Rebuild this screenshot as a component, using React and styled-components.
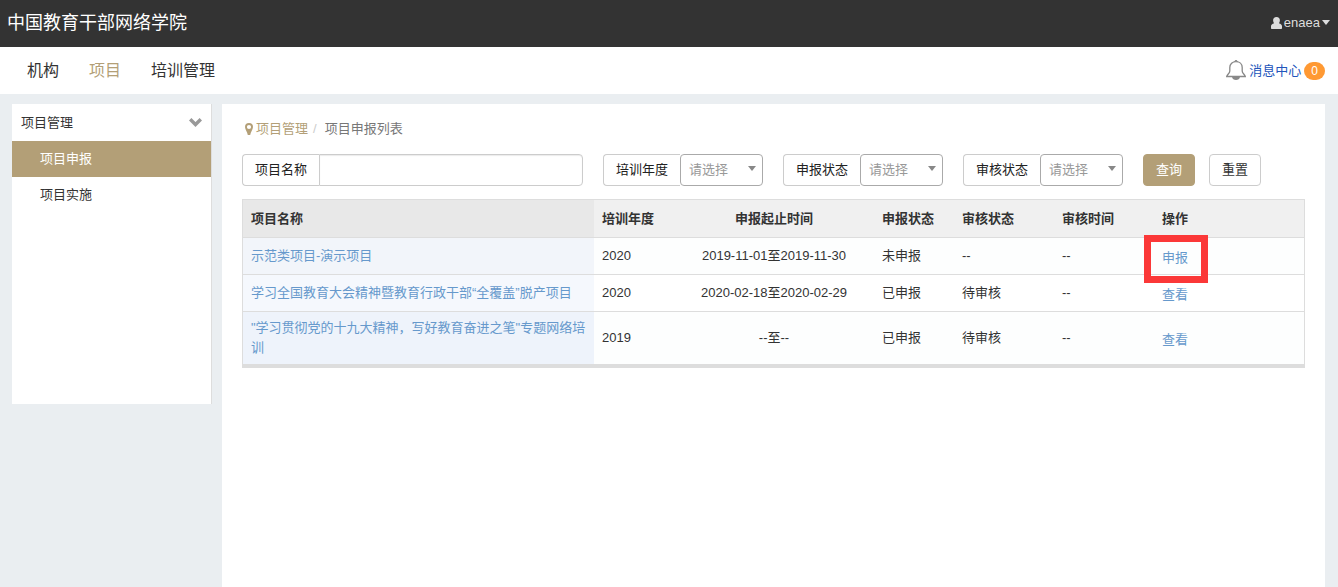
import React, { useState } from "react";
import styled, { createGlobalStyle } from "styled-components";

const navItems = ["机构", "项目", "培训管理"];
const sideItems = ["项目申报", "项目实施"];

const filters = [
  { id: "year", label: "培训年度", options: ["2020", "2019"] },
  { id: "declare", label: "申报状态", options: ["未申报", "已申报"] },
  { id: "audit", label: "审核状态", options: ["待审核", "已审核"] },
];

const projects = [
  {
    name: "示范类项目-演示项目",
    year: "2020",
    range: "2019-11-01至2019-11-30",
    status: "未申报",
    audit: "--",
    auditTime: "--",
    action: "申报",
    marked: true,
    tint: "#f2f5fa",
  },
  {
    name: "学习全国教育大会精神暨教育行政干部“全覆盖”脱产项目",
    year: "2020",
    range: "2020-02-18至2020-02-29",
    status: "已申报",
    audit: "待审核",
    auditTime: "--",
    action: "查看",
    tint: "#f5f8fd",
  },
  {
    name: "\"学习贯彻党的十九大精神，写好教育奋进之笔\"专题网络培训",
    year: "2019",
    range: "--至--",
    status: "已申报",
    audit: "待审核",
    auditTime: "--",
    action: "查看",
    tint: "#eef3fb",
  },
];

function UserIcon() {
  return (
    <svg width="11" height="12" viewBox="0 0 11 12" fill="#ddd" aria-hidden="true">
      <path d="M5.500 0C3.300 0 2.100 1.300 2.100 3.300c0 1.200.4 2.200 1 2.900C1.200 6.700 0 7.800 0 9.300V11c0 .6.400 1 1 1h9c.6 0 1-.4 1-1V9.300c0-1.500-1.200-2.600-3.100-3.100.6-.7 1-1.700 1-2.900C8.900 1.300 7.700 0 5.500 0z" />
    </svg>
  );
}

function BellIcon() {
  return (
    <svg width="20" height="21" viewBox="0 0 20 21" fill="none" stroke="#888" aria-hidden="true">
      <path d="M8.500 1.800C8.500 0 11.500 0 11.500 1.800" />
      <path d="M3.800 11V7.500c0-3.600 2.700-5.800 6.200-5.800s6.200 2.200 6.200 5.800V11c0 2.400 2.500 3.200 3.100 5.500H.7C1.300 14.200 3.800 13.400 3.800 11z" strokeWidth="1.300" />
      <path d="M6 17h8c-.3 1.900-1.900 3-4 3s-3.700-1.100-4-3z" fill="#888" stroke="none" />
    </svg>
  );
}

function MarkerIcon() {
  return (
    <svg width="8" height="12" viewBox="0 0 8 12" fill="#b39f77" aria-hidden="true">
      <path fillRule="evenodd" d="M4 0a4 4 0 0 0-4 4c0 2.500 2.300 4.500 2.800 8h2.400C5.700 8.500 8 6.500 8 4a4 4 0 0 0-4-4zm0 1.900a2.100 2.100 0 1 1 0 4.200 2.100 2.100 0 0 1 0-4.200z" />
    </svg>
  );
}

function ChevronIcon() {
  return (
    <svg width="13" height="9" viewBox="0 0 13 9" fill="none" stroke="#999" strokeWidth="3.400" aria-hidden="true">
      <path d="M1.200 1.300l5.300 5.200 5.300-5.200" />
    </svg>
  );
}

function Caret({ color }) {
  return (
    <svg width="8" height="5" viewBox="0 0 8 5" fill={color} aria-hidden="true">
      <path d="M0 0h8L4 5z" />
    </svg>
  );
}

export default function App() {
  const [name, setName] = useState("");
  const [values, setValues] = useState({});

  const reset = () => {
    setName("");
    setValues({});
  };

  return (
    <>
      <GlobalStyle />
      <Page>
        <Header>
          <Brand>中国教育干部网络学院</Brand>
          <UserMenu type="button">
            <UserIcon />
            <span>enaea</span>
            <Caret color="#ddd" />
          </UserMenu>
        </Header>
        <NavBar>
          <NavLinks>
            {navItems.map((item) => (
              <NavLink key={item} href="#" $active={item === "项目"}>
                {item}
              </NavLink>
            ))}
          </NavLinks>
          <Messages href="#">
            <BellIcon />
            <span>消息中心</span>
            <Badge>0</Badge>
          </Messages>
        </NavBar>
        <Body>
          <Sidebar>
            <SideTitle type="button">
              项目管理
              <ChevronIcon />
            </SideTitle>
            {sideItems.map((item) => (
              <SideLink key={item} href="#" $active={item === "项目申报"}>
                {item}
              </SideLink>
            ))}
          </Sidebar>
          <Main>
            <Breadcrumb>
              <MarkerIcon />
              <a href="#">项目管理</a>
              <i>/</i>
              <span>项目申报列表</span>
            </Breadcrumb>
            <FilterBar onSubmit={(e) => e.preventDefault()}>
              <NameField>
                <FieldLabel htmlFor="name">项目名称</FieldLabel>
                <NameInput id="name" value={name} onChange={(e) => setName(e.target.value)} />
              </NameField>
              {filters.map(({ id, label, options }) => (
                <Field key={id}>
                  <FieldLabel htmlFor={id}>{label}</FieldLabel>
                  <SelectBox>
                    <select
                      id={id}
                      value={values[id] || ""}
                      onChange={(e) => setValues({ ...values, [id]: e.target.value })}
                    >
                      <option value="">请选择</option>
                      {options.map((option) => (
                        <option key={option}>{option}</option>
                      ))}
                    </select>
                    <Caret color="#888" />
                  </SelectBox>
                </Field>
              ))}
              <Buttons>
                <Button $primary>查询</Button>
                <Button type="button" onClick={reset}>重置</Button>
              </Buttons>
            </FilterBar>
            <Table>
              <colgroup>
                <col width="351" />
                <col width="80" />
                <col width="200" />
                <col width="80" />
                <col width="100" />
                <col width="100" />
                <col />
              </colgroup>
              <thead>
                <tr>
                  <th>项目名称</th>
                  <th>培训年度</th>
                  <th>申报起止时间</th>
                  <th>申报状态</th>
                  <th>审核状态</th>
                  <th>审核时间</th>
                  <th>操作</th>
                </tr>
              </thead>
              <tbody>
                {projects.map((project) => (
                  <tr key={project.name}>
                    <NameCell $tint={project.tint}>
                      <a href="#">{project.name}</a>
                    </NameCell>
                    <td>{project.year}</td>
                    <td>{project.range}</td>
                    <td>{project.status}</td>
                    <td>{project.audit}</td>
                    <td>{project.auditTime}</td>
                    <ActionCell>
                      <ActionLink href="#" $marked={project.marked}>
                        {project.action}
                      </ActionLink>
                    </ActionCell>
                  </tr>
                ))}
              </tbody>
            </Table>
          </Main>
        </Body>
      </Page>
    </>
  );
}

const GlobalStyle = createGlobalStyle`
* {
  box-sizing: border-box;
}
body {
  margin: 0;
  color: #333;
  background-color: #eaeef1;
  font: 13px/20px "Liberation Sans", "Noto Sans CJK SC", sans-serif;
}
a {
  text-decoration: none;
}
button, input, select {
  font: inherit;
  color: inherit;
}
button {
  cursor: pointer;
}
svg {
  display: block;
  flex: none;
}
`;
const Page = styled.div`
  display: flex;
  flex-direction: column;
  min-height: 100vh;
`;
const Header = styled.header`
  display: flex;
  justify-content: space-between;
  align-items: center;
  height: 47px;
  padding: 0 8px 2px 7px;
  background-color: #333;
`;
const Brand = styled.h1`
  margin: 0;
  color: #fff;
  font-size: 18px;
  font-weight: normal;
  line-height: 24px;
`;
const UserMenu = styled.button`
  display: flex;
  align-items: center;
  gap: 2px;
  padding: 0;
  border: 0;
  background: none;
  color: #ddd;
`;
const NavBar = styled.nav`
  display: flex;
  justify-content: space-between;
  align-items: center;
  height: 47px;
  padding: 0 13px 0 27px;
  background-color: #fff;
`;
const NavLinks = styled.div`
  display: flex;
  gap: 30px;
`;
const NavLink = styled.a`
  color: ${({ $active }) => ($active ? "#b39f77" : "#333")};
  font-size: 16px;
  line-height: 24px;
`;
const Messages = styled.a`
  display: flex;
  align-items: center;
  gap: 3px;
  color: #25b;
`;
const Badge = styled.span`
  padding: 0 7px;
  border-radius: 9px;
  background-color: #f93;
  color: #fff;
  font-size: 12px;
  line-height: 18px;
`;
const Body = styled.div`
  display: flex;
  flex: 1;
  align-items: flex-start;
  gap: 10px;
  padding: 10px 13px 0 12px;
`;
const Sidebar = styled.aside`
  flex: none;
  width: 200px;
  min-height: 300px;
  border-right: 1px solid #ddd;
  background-color: #fff;
`;
const SideTitle = styled.button`
  display: flex;
  justify-content: space-between;
  align-items: center;
  width: 100%;
  height: 37px;
  padding: 0 9px;
  border: 0;
  background: none;
`;
const SideLink = styled.a`
  display: block;
  padding-left: 28px;
  background-color: ${({ $active }) => ($active ? "#b39f77" : "#fff")};
  color: ${({ $active }) => ($active ? "#fff" : "#333")};
  line-height: 36px;
`;
const Main = styled.main`
  flex: 1;
  align-self: stretch;
  min-width: 0;
  padding: 15px 20px;
  background-color: #fff;
`;
const Breadcrumb = styled.div`
  display: flex;
  align-items: center;
  gap: 3px;
  padding-left: 3px;
  color: #777;
  a {
    color: #b39f77;
  }
  i {
    padding: 0 5px 0 2px;
    color: #ccc;
    font-style: normal;
  }
`;
const FilterBar = styled.form`
  display: flex;
  flex-wrap: wrap;
  gap: 12px 20px;
  margin: 15px 0 13px;
`;
const Field = styled.div`
  display: flex;
  height: 32px;
`;
const NameField = styled(Field)`
  width: 341px;
`;
const FieldLabel = styled.label`
  flex: none;
  padding: 0 12px;
  border: 1px solid #ccc;
  border-right: 0;
  border-radius: 4px 0 0 4px;
  color: #222;
  line-height: 30px;
`;
const NameInput = styled.input`
  flex: 1;
  min-width: 0;
  padding: 0 8px;
  border: 1px solid #ccc;
  border-radius: 0 4px 4px 0;
  box-shadow: inset 0 1px 1px rgba(0, 0, 0, 0.08);
`;
const SelectBox = styled.div`
  position: relative;
  select {
    appearance: none;
    width: 83px;
    height: 32px;
    padding: 0 8px;
    border: 1px solid #aaa;
    border-radius: 4px;
    background-color: #fff;
    color: #999;
  }
  svg {
    position: absolute;
    top: 12px;
    right: 7px;
    pointer-events: none;
  }
`;
const Buttons = styled.div`
  display: flex;
  gap: 14px;
`;
const Button = styled.button`
  width: 52px;
  height: 32px;
  padding: 0;
  border: 1px solid ${({ $primary }) => ($primary ? "#b39f77" : "#ccc")};
  border-radius: 4px;
  background-color: ${({ $primary }) => ($primary ? "#b39f77" : "#fff")};
  color: ${({ $primary }) => ($primary ? "#fff" : "#333")};
`;
const Table = styled.table`
  width: 100%;
  table-layout: fixed;
  border: 1px solid #ddd;
  border-bottom-width: 4px;
  border-spacing: 0;
  th, td {
    height: 37px;
    padding: 6px 8px;
    border-bottom: 1px solid #ddd;
    text-align: left;
  }
  th {
    height: 38px;
    background-color: #f0f0f0;
  }
  th:first-child {
    background-color: #e8e8e8;
  }
  th:nth-child(3), td:nth-child(3) {
    text-align: center;
  }
  tbody tr:nth-child(odd) {
    background-color: #fdfefe;
  }
  tbody tr:last-child td {
    border-bottom: 0;
  }
`;
const NameCell = styled.td`
  background-color: ${({ $tint }) => $tint};
  a {
    color: #69c;
  }
`;
const ActionCell = styled.td`
  && {
    padding-top: 10px;
  }
`;
const ActionLink = styled.a`
  position: relative;
  display: inline-block;
  vertical-align: top;
  color: #69c;
  ${({ $marked }) => $marked && `
    &::after {
      content: "";
      position: absolute;
      inset: -13px -20px -15px -18px;
      border: 7px solid #fb3838;
      pointer-events: none;
    }
  `}
`;
